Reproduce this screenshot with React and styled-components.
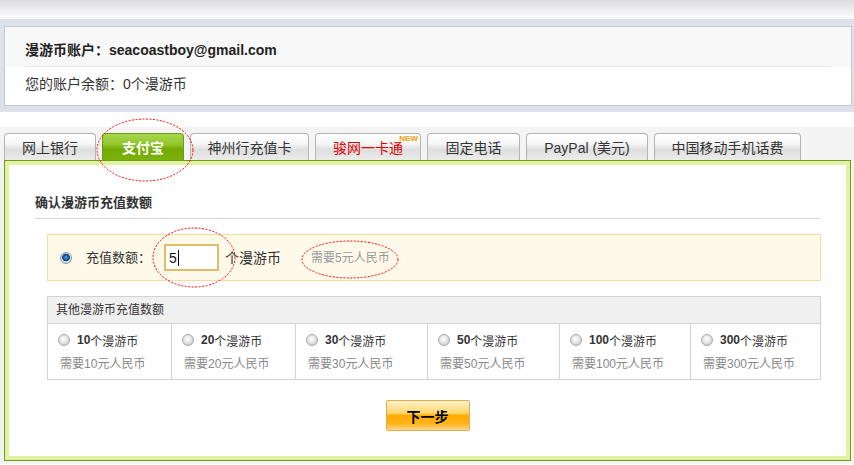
import React from 'react';
import styled, { createGlobalStyle, css } from 'styled-components';

const Global = createGlobalStyle`
html, body {
    margin: 0;
    padding: 0;
    background: #fff;
}
body {
    font-family: "Liberation Sans", Arial, "Noto Sans CJK SC", sans-serif;
    color: #333;
    font-size: 12px;
}
`

const Page = styled.div`
position: relative;
width: 854px;
height: 465px;
overflow: hidden;
`

const TopBar = styled.div`
height: 19px;
background: linear-gradient(#dcdce0, #eeeef0 55%, #fdfdfd);
`

const AccountBand = styled.div`
background: #dde1ea;
padding: 7px 2px 6px 4px;
margin-bottom: 15px;
`

const AccountBox = styled.div`
border: 1px solid #c3c9d3;
background: #fff;
`

const AccountHead = styled.div`
background: #f8f8f8;
padding: 13px 20px 0;
`

const AccountTitle = styled.div`
font-size: 14px;
font-weight: bold;
line-height: 20px;
color: #222;
padding-bottom: 6px;
border-bottom: 1px solid #e8e8e8;
`

const Balance = styled.div`
padding: 7px 20px 11px;
font-size: 14px;
line-height: 20px;
color: #333;
`

const PayArea = styled.div`
background: #f4f4f4;
padding: 6px 3px 3px 4px;
`

const TabRow = styled.div`
display: flex;
gap: 6px;
height: 27px;
`

const Tab = styled.div`
position: relative;
box-sizing: border-box;
height: 27px;
display: flex;
align-items: center;
justify-content: center;
font-size: 14px;
color: ${p => p.$hot ? '#e00000' : '#333'};
border: 1px solid #b3b3b3;
border-bottom: none;
border-radius: 4px 4px 0 0;
background: linear-gradient(#ffffff 0%, #f7f7f7 35%, #dedede 62%, #ececec 100%);
${p => p.$active && css`
    color: #fff;
    font-weight: bold;
    border-color: #6c9c17;
    background: linear-gradient(#a8d64e 0%, #92c62a 40%, #74aa02 58%, #7cb20c 100%);
`}
`

const NewBadge = styled.span`
position: absolute;
top: 1px;
right: 2px;
font-size: 8px;
line-height: 8px;
font-weight: bold;
color: #ff9a00;
font-family: "Liberation Sans", Arial, sans-serif;
`

const Frame = styled.div`
border: 1px solid #6c9c18;
box-shadow: inset 0 0 0 4px #e2f1a2;
background: #fff;
padding: 32px 30px 29px 30px;
`

const SectionTitle = styled.div`
font-size: 13px;
font-weight: bold;
line-height: 20px;
color: #333;
padding-bottom: 5px;
border-bottom: 1px solid #d6d6d6;
`

const Inner = styled.div`
padding: 15px 0 0 12px;
margin-right: -1px;
`

const CustomBox = styled.div`
box-sizing: border-box;
height: 47px;
display: flex;
align-items: center;
padding-left: 12px;
background: #fef9e9;
border: 1px solid #f0dca0;
`

const Radio = styled.span`
flex: none;
box-sizing: border-box;
width: 12px;
height: 12px;
border-radius: 50%;
border: 1px solid ${p => p.$on ? '#8697a8' : '#a9a9a9'};
background: ${p => p.$on
    ? 'radial-gradient(circle at 50% 45%, #5aa6e6 0, #1b64ad 2px, #0d3f73 3.5px, #dfe6ee 4.2px, #c2cbd4 100%)'
    : 'radial-gradient(circle at 45% 40%, #ffffff 0, #e6e6e6 45%, #bdbdbd 100%)'};
`

const Label = styled.span`
font-size: 13px;
line-height: 20px;
color: #333;
margin: 0 13px 0 14px;
`

const AmountField = styled.div`
box-sizing: border-box;
width: 55px;
height: 27px;
border: 2px solid #e2bc6a;
background: #fff;
display: flex;
align-items: center;
padding-left: 3px;
font-size: 14px;
color: #111;
`

const Caret = styled.span`
display: inline-block;
width: 1px;
height: 16px;
background: #000;
margin-left: 1px;
`

const Unit = styled.span`
font-size: 14px;
line-height: 20px;
color: #333;
margin-left: 6px;
`

const Need = styled.span`
font-size: 12px;
line-height: 20px;
color: #999;
margin-left: 30px;
`

const Table = styled.div`
margin-top: 15px;
border: 1px solid #d3d3d3;
`

const TableHead = styled.div`
height: 26px;
line-height: 26px;
padding-left: 8px;
background: #f0f0f0;
border-bottom: 1px solid #d3d3d3;
font-size: 12px;
color: #333;
`

const Options = styled.div`
display: grid;
grid-template-columns: 124px 124px 132px 132px 131px 1fr;
height: 55px;
`

const Option = styled.div`
padding: 4px 0 0 10px;
border-right: 1px solid #d3d3d3;
&:last-child {
    border-right: none;
}
`

const OptionLine = styled.div`
display: flex;
align-items: center;
height: 24px;
font-size: 12px;
color: #333;
b {
    margin-left: 7px;
    font-size: 12px;
}
`

const OptionNeed = styled.div`
height: 24px;
line-height: 24px;
padding-left: 2px;
font-size: 12px;
color: #888;
`

const ButtonRow = styled.div`
display: flex;
justify-content: center;
margin-top: 20px;
`

const NextButton = styled.button`
box-sizing: border-box;
width: 84px;
height: 31px;
border: 1px solid #e2ac50;
border-radius: 2px;
background: linear-gradient(#fff2c6 0%, #ffd66e 42%, #ffab00 50%, #ffb41c 78%, #ffd78a 100%);
font-family: "Liberation Sans", "Noto Sans CJK SC", sans-serif;
font-size: 14px;
font-weight: bold;
color: #000;
cursor: pointer;
padding: 0;
`

const Marks = styled.svg`
position: absolute;
left: 0;
top: 0;
pointer-events: none;
`

const tabs = [
    { label: '网上银行', width: 92 },
    { label: '支付宝', width: 82, active: true },
    { label: '神州行充值卡', width: 119 },
    { label: '骏网一卡通', width: 106, hot: true },
    { label: '固定电话', width: 93 },
    { label: 'PayPal (美元)', width: 122 },
    { label: '中国移动手机话费', width: 147 },
];

const amounts = [10, 20, 30, 50, 100, 300];

export default function App() {
    return <Page>
        <Global />
        <TopBar />
        <AccountBand>
            <AccountBox>
                <AccountHead>
                    <AccountTitle>漫游币账户：seacoastboy@gmail.com</AccountTitle>
                </AccountHead>
                <Balance>您的账户余额：0个漫游币</Balance>
            </AccountBox>
        </AccountBand>
        <PayArea>
            <TabRow>
                {tabs.map(t =>
                    <Tab key={t.label} $active={t.active} $hot={t.hot} style={{ width: t.width }}>
                        {t.label}
                        {t.hot && <NewBadge>NEW</NewBadge>}
                    </Tab>
                )}
            </TabRow>
            <Frame>
                <SectionTitle>确认漫游币充值数额</SectionTitle>
                <Inner>
                    <CustomBox>
                        <Radio $on />
                        <Label>充值数额：</Label>
                        <AmountField>5<Caret /></AmountField>
                        <Unit>个漫游币</Unit>
                        <Need>需要5元人民币</Need>
                    </CustomBox>
                    <Table>
                        <TableHead>其他漫游币充值数额</TableHead>
                        <Options>
                            {amounts.map(a =>
                                <Option key={a}>
                                    <OptionLine><Radio /><b>{a}</b>个漫游币</OptionLine>
                                    <OptionNeed>需要{a}元人民币</OptionNeed>
                                </Option>
                            )}
                        </Options>
                    </Table>
                </Inner>
                <ButtonRow>
                    <NextButton>下一步</NextButton>
                </ButtonRow>
            </Frame>
        </PayArea>
        <Marks width="854" height="465" viewBox="0 0 854 465">
            <g fill="none" stroke="#ff0000" strokeWidth="1" strokeDasharray="2 1.5">
                <ellipse cx="145" cy="150" rx="48" ry="31" />
                <ellipse cx="194" cy="257.5" rx="41" ry="29.5" />
                <ellipse cx="350" cy="259.5" rx="48" ry="18.5" />
            </g>
        </Marks>
    </Page>
}
